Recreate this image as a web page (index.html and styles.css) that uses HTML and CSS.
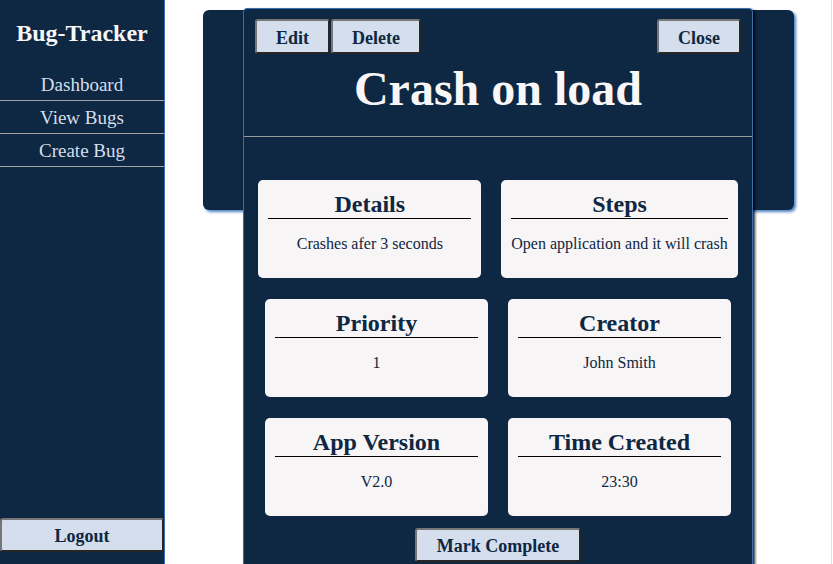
FILE: index.html
```html
<!DOCTYPE html>
<html lang="en">
<head>
<meta charset="utf-8">
<title>Bug-Tracker</title>
<link rel="stylesheet" href="styles.css">
</head>
<body>
<div class="app">
  <aside class="sidebar">
    <h2 class="brand">Bug-Tracker</h2>
    <ul class="nav">
      <li><a href="#">Dashboard</a></li>
      <li><a href="#">View Bugs</a></li>
      <li><a href="#">Create Bug</a></li>
    </ul>
    <button class="btn logout">Logout</button>
  </aside>
  <main class="main">
    <div class="panel"></div>
    <div class="modal">
      <header class="modal-head">
        <div class="actions">
          <div class="left-actions">
            <button class="btn">Edit</button>
            <button class="btn">Delete</button>
          </div>
          <button class="btn">Close</button>
        </div>
        <h1 class="title">Crash on load</h1>
      </header>
      <div class="modal-body">
        <div class="row">
          <div class="card"><h2>Details</h2><p>Crashes afer 3 seconds</p></div>
          <div class="card"><h2>Steps</h2><p>Open application and it will crash</p></div>
        </div>
        <div class="row">
          <div class="card"><h2>Priority</h2><p>1</p></div>
          <div class="card"><h2>Creator</h2><p>John Smith</p></div>
        </div>
        <div class="row">
          <div class="card"><h2>App Version</h2><p>V2.0</p></div>
          <div class="card"><h2>Time Created</h2><p>23:30</p></div>
        </div>
        <div class="complete-row">
          <button class="btn complete">Mark Complete</button>
        </div>
      </div>
    </div>
  </main>
</div>
</body>
</html>
```
FILE: styles.css
```css
html, body {
  margin: 0;
  padding: 0;
  height: 100%;
  overflow: hidden;
  background: #ffffff;
  font-family: "Liberation Serif", "Times New Roman", serif;
}

.app {
  display: flex;
  width: 831px;
  height: 564px;
  border-right: 1px solid #e2e2e2;
}

.sidebar {
  width: 164px;
  flex: none;
  background: #0e2742;
  border-right: 1px solid #3a6fae;
  display: flex;
  flex-direction: column;
  align-items: stretch;
}

.brand {
  margin: 19px 0 21px;
  font-size: 24px;
  line-height: 28px;
  font-weight: bold;
  color: #f8f6f7;
  text-align: center;
}

.nav {
  list-style: none;
  margin: 0;
  padding: 0;
}

.nav li {
  border-bottom: 1px solid #a3a3a3;
  text-align: center;
  padding: 6px 0 4px;
  font-size: 19px;
  line-height: 22px;
}

.nav a {
  color: #d4deec;
  text-decoration: none;
}

.btn {
  font-family: "Liberation Serif", "Times New Roman", serif;
  font-weight: bold;
  font-size: 18px;
  line-height: 20px;
  color: #0e2742;
  background: #d4deec;
  border: 2px solid;
  border-color: #767676 #262626 #262626 #767676;
  border-radius: 3px;
  height: 35px;
  padding: 2px 19px 0;
  cursor: pointer;
}

.logout {
  margin-top: auto;
  margin-bottom: 12px;
  height: 34px;
  width: 164px;
  padding: 1px 0 0;
}

.main {
  flex: 1;
  position: relative;
  padding: 10px 37px 0 38px;
}

.panel {
  height: 200px;
  background: #0e2742;
  border-radius: 6px;
  box-shadow: 2px 2px 3px #4d83c4;
}

.modal {
  position: absolute;
  top: 8px;
  left: 78px;
  width: 508px;
  height: 620px;
  background: #0e2742;
  border: 1px solid #3a6fae;
  border-radius: 4px 4px 0 0;
  box-shadow: 2px 2px 3px rgba(0, 0, 0, 0.85);
}

.modal-head {
  padding: 10px 11px 20px;
  border-bottom: 1px solid #9a9a9a;
}

.actions {
  display: flex;
  justify-content: space-between;
}

.left-actions {
  display: flex;
  gap: 1px;
}

.title {
  margin: 7px 0 0;
  font-size: 48px;
  line-height: 55px;
  font-weight: bold;
  color: #f8f6f7;
  text-align: center;
}

.modal-body {
  padding-top: 43px;
  display: flex;
  flex-direction: column;
  gap: 21px;
}

.row {
  display: flex;
  justify-content: center;
  gap: 20px;
}

.card {
  min-width: 203px;
  padding: 10px;
  background: #f7f5f6;
  border-radius: 5px;
  text-align: center;
  color: #0e2742;
}

.card h2 {
  margin: 0;
  font-size: 24px;
  line-height: 28px;
  border-bottom: 1px solid #000000;
}

.card p {
  margin: 16px 0 15px;
  font-size: 16px;
  line-height: 18px;
  white-space: nowrap;
}

.complete-row {
  display: flex;
  justify-content: center;
  margin-top: -9px;
}

.complete {
  height: 34px;
  padding: 2px 20px 0;
}
```
